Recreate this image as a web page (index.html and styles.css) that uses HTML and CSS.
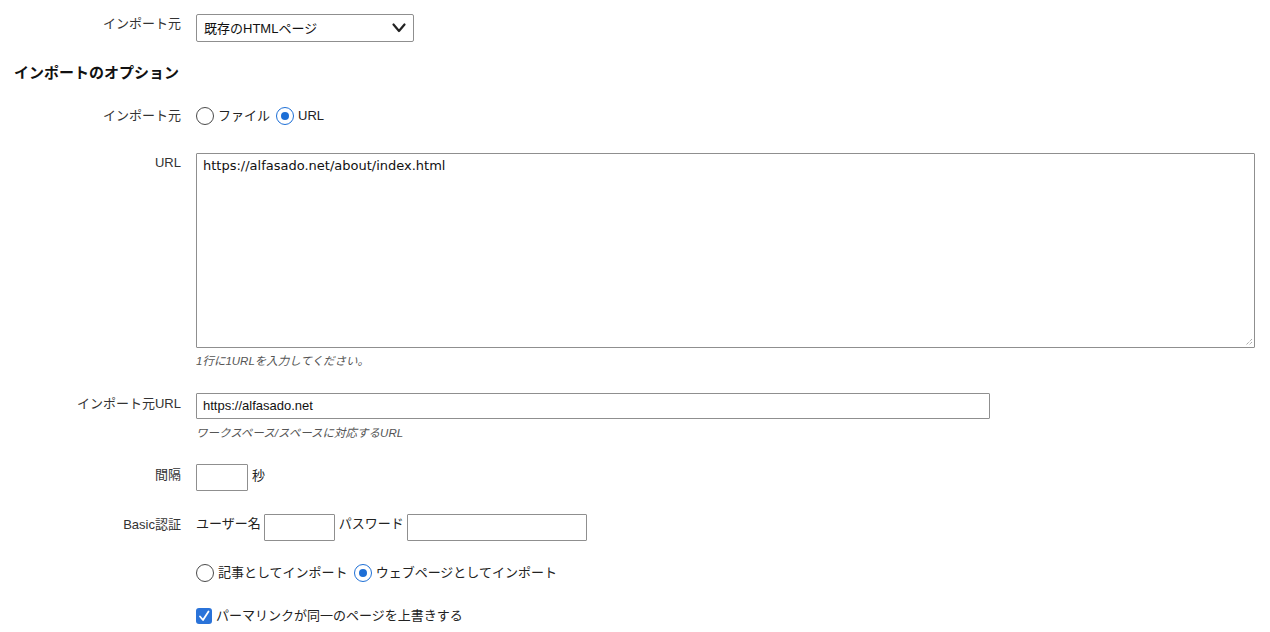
FILE: index.html
```html
<!DOCTYPE html>
<html lang="ja">
<head>
<meta charset="utf-8">
<title>インポート</title>
<link rel="stylesheet" href="styles.css">
</head>
<body>
<div class="page">
  <div class="row row-first">
    <div class="label label-select">インポート元</div>
    <div class="control">
      <div class="select">
        <span class="select-text">既存のHTMLページ</span>
        <svg class="chev" width="14" height="10" viewBox="0 0 14 10"><path d="M1.5 1.5 L7 8 L12.5 1.5" fill="none" stroke="#222" stroke-width="2.2" stroke-linecap="round" stroke-linejoin="round"/></svg>
      </div>
    </div>
  </div>

  <h2 class="heading">インポートのオプション</h2>

  <div class="row row-radio1">
    <div class="label label-inline">インポート元</div>
    <div class="control inline">
      <label class="opt"><span class="radio"></span>ファイル</label>
      <label class="opt"><span class="radio checked"></span>URL</label>
    </div>
  </div>

  <div class="row row-textarea">
    <div class="label label-ta">URL</div>
    <div class="control">
      <div class="textarea">https://alfasado.net/about/index.html<svg class="grip" width="9" height="9" viewBox="0 0 9 9"><path d="M8 2 L2 8 M8 5 L5 8" stroke="#888" stroke-width="1" stroke-dasharray="1 1"/></svg></div>
      <div class="hint hint-ta">1行に1URLを入力してください。</div>
    </div>
  </div>

  <div class="row row-url">
    <div class="label label-input">インポート元URL</div>
    <div class="control">
      <div class="input input-url">https://alfasado.net</div>
      <div class="hint hint-url">ワークスペース/スペースに対応するURL</div>
    </div>
  </div>

  <div class="row row-interval">
    <div class="label label-box">間隔</div>
    <div class="control inline">
      <div class="input input-small"></div>
      <span class="unit">秒</span>
    </div>
  </div>

  <div class="row row-basic">
    <div class="label label-box">Basic認証</div>
    <div class="control inline">
      <span class="unit-l">ユーザー名</span>
      <div class="input input-user"></div>
      <span class="unit-l">パスワード</span>
      <div class="input input-pass"></div>
    </div>
  </div>

  <div class="row row-radio2">
    <div class="label"></div>
    <div class="control inline">
      <label class="opt"><span class="radio"></span>記事としてインポート</label>
      <label class="opt"><span class="radio checked"></span>ウェブページとしてインポート</label>
    </div>
  </div>

  <div class="row row-check">
    <div class="label"></div>
    <div class="control inline">
      <label class="opt"><span class="check"><svg width="16" height="16" viewBox="0 0 16 16"><path d="M4 8.5 L7 12 L12.5 3.5" fill="none" stroke="#fff" stroke-width="1.8" stroke-linecap="round" stroke-linejoin="round"/></svg></span>パーマリンクが同一のページを上書きする</label>
    </div>
  </div>
</div>
</body>
</html>
```

FILE: styles.css
```css
* { box-sizing: border-box; }
html, body { margin: 0; padding: 0; background: #fff; }
body {
  font-family: "Liberation Sans", "Noto Sans CJK JP", sans-serif;
  font-size: 13px;
  color: #222;
}
.page {
  width: 1270px;
  padding: 14px 15px 0 14px;
}
.row {
  display: grid;
  grid-template-columns: 167px 1fr;
  column-gap: 15px;
}
.label {
  text-align: right;
  color: #333;
  line-height: 18px;
  white-space: nowrap;
}
.control { min-width: 0; }
.inline {
  display: flex;
  align-items: center;
  white-space: nowrap;
}

.row-first { height: 28px; }
.label-select { padding-top: 1px; }
.select {
  width: 218px;
  height: 28px;
  border: 1px solid #8f8f8f;
  border-radius: 2px;
  display: flex;
  align-items: center;
  justify-content: space-between;
  padding: 0 6px 2px 7px;
  color: #111;
}
.chev { margin-right: 1px; margin-top: 2px; }

.heading {
  margin: 21px 0 0 0;
  font-size: 15px;
  line-height: 20px;
  font-weight: bold;
  color: #111;
}

.row-radio1 { margin-top: 23px; height: 20px; }
.label-inline { line-height: 20px; }
.opt {
  display: inline-flex;
  align-items: center;
  line-height: 20px;
  margin-right: 6px;
  color: #222;
}
.radio {
  width: 18px;
  height: 18px;
  border: 1px solid #4a4a4a;
  border-radius: 50%;
  margin-right: 4px;
  display: inline-block;
  position: relative;
  background: #fff;
}
.radio.checked {
  border: 1.5px solid #1d6fd6;
}
.radio.checked::after {
  content: "";
  position: absolute;
  left: 50%;
  top: 50%;
  width: 8px;
  height: 8px;
  margin: -4px 0 0 -4px;
  border-radius: 50%;
  background: #1d6fd6;
}

.row-textarea { margin-top: 27px; }
.label-ta { padding-top: 1px; }
.textarea {
  position: relative;
  height: 195px;
  border: 1px solid #8f8f8f;
  border-radius: 1px;
  padding: 4px 6px;
  line-height: 16px;
  color: #111;
  font-family: "DejaVu Sans", "Noto Sans CJK JP", sans-serif;
  font-size: 13px;
}
.grip { position: absolute; right: 1px; bottom: 1px; }
.hint {
  font-size: 11.5px;
  font-style: italic;
  color: #555;
  line-height: 16px;
}
.hint-ta { margin-top: 5px; }

.row-url { margin-top: 24px; }
.label-input { padding-top: 2px; }
.input {
  height: 26px;
  border: 1px solid #8f8f8f;
  border-radius: 1px;
  padding: 0 6px;
  line-height: 24px;
  color: #111;
}
.input-url { width: 794px; }
.hint-url { margin-top: 6px; }

.row-interval { margin-top: 23px; }
.row-interval .inline, .row-basic .inline { align-items: flex-start; }
.label-box { padding-top: 2px; }
.input-small { width: 52px; height: 27px; }
.unit { margin-left: 4px; line-height: 18px; padding-top: 3px; }

.row-basic { margin-top: 23px; }
.unit-l { line-height: 18px; padding-top: 1px; margin-right: 3px; }
.input-user { width: 71px; height: 27px; margin-right: 4px; }
.input-pass { width: 180px; height: 27px; }

.row-radio2 { margin-top: 22px; height: 20px; }
.row-check { margin-top: 23px; height: 20px; }
.check {
  width: 16px;
  height: 16px;
  border-radius: 3px;
  background: #2a73d9;
  margin-right: 4px;
  display: inline-block;
}
.check svg { display: block; }
```
